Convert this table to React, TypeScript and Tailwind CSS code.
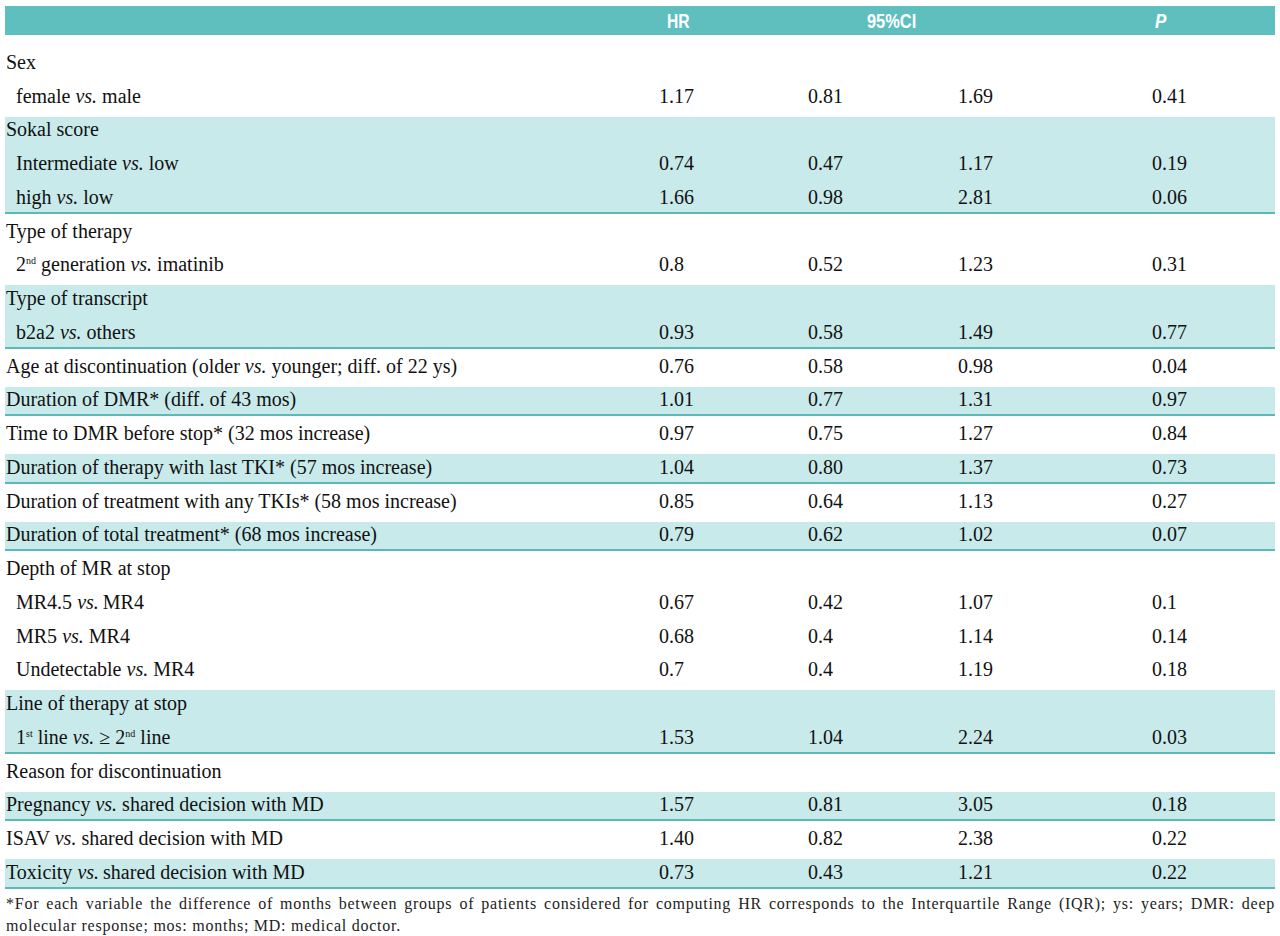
import React from "react";

type Row = {
  label: React.ReactNode;
  sub?: boolean;
  vals?: string[];
};

type Group = {
  shaded: boolean;
  rows: Row[];
};

const Vs = ({ tight }: { tight?: boolean }) => (
  <>
    <i>vs.</i>
    {tight ? "\u2009" : " "}
  </>
);

const Sup = ({ children }: { children: React.ReactNode }) => (
  <span className="relative -top-[7px] text-[10px] leading-none">{children}</span>
);

const groups: Group[] = [
  {
    shaded: false,
    rows: [
      { label: "Sex" },
      { label: <>female <Vs />male</>, sub: true, vals: ["1.17", "0.81", "1.69", "0.41"] },
    ],
  },
  {
    shaded: true,
    rows: [
      { label: "Sokal score" },
      { label: <>Intermediate <Vs />low</>, sub: true, vals: ["0.74", "0.47", "1.17", "0.19"] },
      { label: <>high <Vs />low</>, sub: true, vals: ["1.66", "0.98", "2.81", "0.06"] },
    ],
  },
  {
    shaded: false,
    rows: [
      { label: "Type of therapy" },
      {
        label: <>2<Sup>nd</Sup> generation <Vs />imatinib</>,
        sub: true,
        vals: ["0.8", "0.52", "1.23", "0.31"],
      },
    ],
  },
  {
    shaded: true,
    rows: [
      { label: "Type of transcript" },
      { label: <>b2a2 <Vs />others</>, sub: true, vals: ["0.93", "0.58", "1.49", "0.77"] },
    ],
  },
  {
    shaded: false,
    rows: [
      {
        label: <>Age at discontinuation (older <Vs />younger; diff. of 22 ys)</>,
        vals: ["0.76", "0.58", "0.98", "0.04"],
      },
    ],
  },
  {
    shaded: true,
    rows: [{ label: "Duration of DMR* (diff. of 43 mos)", vals: ["1.01", "0.77", "1.31", "0.97"] }],
  },
  {
    shaded: false,
    rows: [{ label: "Time to DMR before stop* (32 mos increase)", vals: ["0.97", "0.75", "1.27", "0.84"] }],
  },
  {
    shaded: true,
    rows: [
      { label: "Duration of therapy with last TKI* (57 mos increase)", vals: ["1.04", "0.80", "1.37", "0.73"] },
    ],
  },
  {
    shaded: false,
    rows: [
      { label: "Duration of treatment with any TKIs* (58 mos increase)", vals: ["0.85", "0.64", "1.13", "0.27"] },
    ],
  },
  {
    shaded: true,
    rows: [{ label: "Duration of total treatment* (68 mos increase)", vals: ["0.79", "0.62", "1.02", "0.07"] }],
  },
  {
    shaded: false,
    rows: [
      { label: "Depth of MR at stop" },
      { label: <>MR4.5 <Vs tight />MR4</>, sub: true, vals: ["0.67", "0.42", "1.07", "0.1"] },
      { label: <>MR5 <Vs />MR4</>, sub: true, vals: ["0.68", "0.4", "1.14", "0.14"] },
      { label: <>Undetectable <Vs />MR4</>, sub: true, vals: ["0.7", "0.4", "1.19", "0.18"] },
    ],
  },
  {
    shaded: true,
    rows: [
      { label: "Line of therapy at stop" },
      {
        label: <>1<Sup>st</Sup> line <Vs />≥ 2<Sup>nd</Sup> line</>,
        sub: true,
        vals: ["1.53", "1.04", "2.24", "0.03"],
      },
    ],
  },
  {
    shaded: false,
    rows: [{ label: "Reason for discontinuation" }],
  },
  {
    shaded: true,
    rows: [{ label: <>Pregnancy <Vs />shared decision with MD</>, vals: ["1.57", "0.81", "3.05", "0.18"] }],
  },
  {
    shaded: false,
    rows: [{ label: <>ISAV <Vs />shared decision with MD</>, vals: ["1.40", "0.82", "2.38", "0.22"] }],
  },
  {
    shaded: true,
    rows: [{ label: <>Toxicity <Vs tight />shared decision with MD</>, vals: ["0.73", "0.43", "1.21", "0.22"] }],
  },
];

const cols = "grid grid-cols-[654px_149px_150px_194px_1fr]";

const TableRow = ({ row, first }: { row: Row; first: boolean }) => (
  <div className={`${cols} items-end pb-[7px] leading-5 ${first ? "h-[29.75px]" : "h-[33.75px]"}`}>
    <div className={`whitespace-nowrap ${row.sub ? "pl-[11px]" : "pl-[1px]"}`}>{row.label}</div>
    {(row.vals || ["", "", "", ""]).map((v, i) => (
      <div key={i}>{v}</div>
    ))}
  </div>
);

export default function App() {
  return (
    <div className="w-[1280px] h-[936px] bg-white px-[5px] pt-[6px] overflow-hidden">
      {/* header band */}
      <div
        className={`${cols} h-[29px] items-center bg-[#5fbfbf] text-white font-bold text-[20px] font-['Liberation_Sans',sans-serif]`}
      >
        <div />
        <div className="pl-[8px]">
          <span className="inline-block origin-left scale-x-[0.78]">HR</span>
        </div>
        <div className="col-span-2 pl-[59px]">
          <span className="inline-block origin-left scale-x-[0.82]">95%CI</span>
        </div>
        <div className="pl-[3px] italic">
          <span className="inline-block origin-left scale-x-[0.85]">P</span>
        </div>
      </div>

      <div className="mt-[10px] font-['Liberation_Serif',serif] text-[20px] text-[#111]">
        {groups.map((g, gi) =>
          g.shaded ? (
            <div key={gi} className="mt-1 bg-[#c8eaea] shadow-[inset_0_-2px_0_#5db8b8]">
              {g.rows.map((r, ri) => (
                <TableRow key={ri} row={r} first={ri === 0} />
              ))}
            </div>
          ) : (
            <div key={gi}>
              {g.rows.map((r, ri) => (
                <TableRow key={ri} row={r} first={false} />
              ))}
            </div>
          )
        )}
      </div>

      {/* footnote */}
      <div className="mt-[4px] pl-[1px] font-['Liberation_Serif',serif] text-[16px] leading-[22px] tracking-[0.75px] text-[#222]">
        <div className="whitespace-nowrap text-justify [text-align-last:justify]">
          *For each variable the difference of months between groups of patients considered for computing HR
          corresponds to the Interquartile Range (IQR); ys: years; DMR: deep
        </div>
        <div>molecular response; mos: months; MD: medical doctor.</div>
      </div>
    </div>
  );
}
